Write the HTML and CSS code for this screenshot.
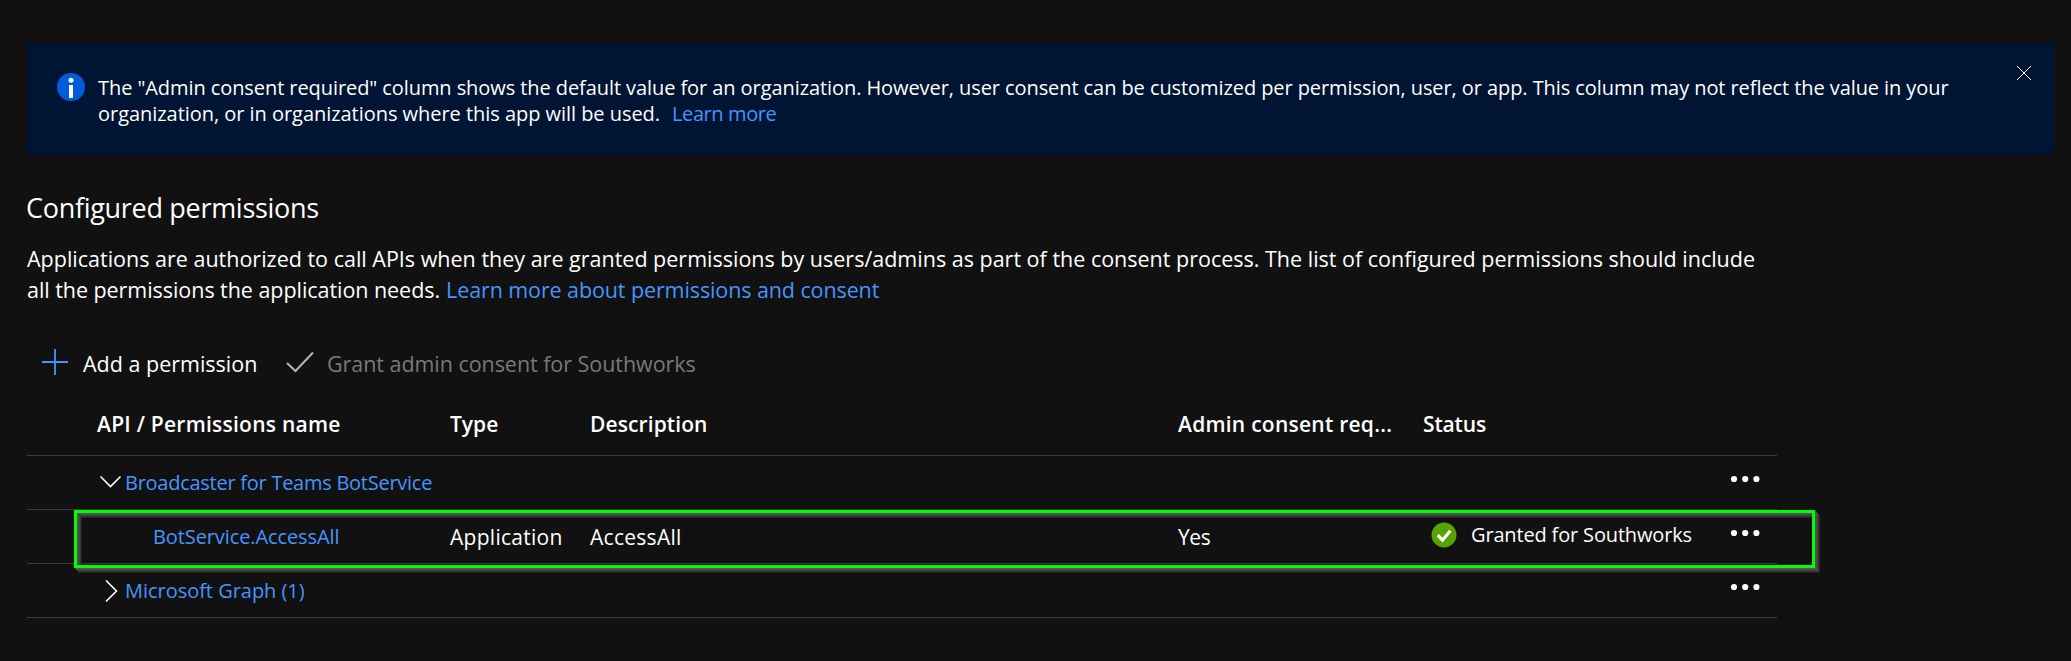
FILE: index.html
```html
<!DOCTYPE html>
<html lang="en">
<head>
<meta charset="utf-8">
<title>Configured permissions</title>
<link rel="stylesheet" href="styles.css">
</head>
<body>
<main class="page">
  <section class="banner">
    <svg class="banner-icon" viewBox="0 0 28 28"><circle cx="14" cy="14" r="14" fill="#015cda"/><circle cx="14" cy="7.3" r="2.5" fill="#fff"/><rect x="12" y="12" width="4" height="13" fill="#fff"/></svg>
    <p class="banner-text"><span class="banner-line">The "Admin consent required" column shows the default value for an organization. However, user consent can be customized per permission, user, or app. This column may not reflect the value in your</span><br><span class="banner-line2">organization, or in organizations where this app will be used.</span><a class="link banner-link">Learn more</a></p>
    <svg class="close" viewBox="0 0 16 16"><path d="M1 1L15 15M15 1L1 15" fill="none" stroke="#fff" stroke-width="1"/></svg>
  </section>

  <h1 class="heading">Configured permissions</h1>
  <p class="intro">Applications are authorized to call APIs when they are granted permissions by users/admins as part of the consent process. The list of configured permissions should include<br><span class="intro-end">all the permissions the application needs.</span><a class="link intro-link">Learn more about permissions and consent</a></p>

  <div class="toolbar">
    <svg class="plus" viewBox="0 0 28 28"><path d="M14 1V27M1 14H27" fill="none" stroke="#4894fe" stroke-width="1.8"/></svg>
    <span class="add">Add a permission</span>
    <svg class="tick" viewBox="0 0 28 22"><path d="M1 12L9.500 20L27 1.500" fill="none" stroke="#b5b5b5" stroke-width="2"/></svg>
    <span class="grant">Grant admin consent for Southworks</span>
  </div>

  <div class="table">
    <div class="row head">
      <span></span><span class="h-api">API / Permissions name</span><span>Type</span><span class="h-desc">Description</span><span class="h-admin">Admin consent req...</span><span class="h-status">Status</span><span></span>
    </div>
    <div class="row">
      <span></span>
      <span class="api"><svg class="chevron" viewBox="0 0 26 34"><path d="M3.500 7.500L13.500 17.500L23.500 7.500" fill="none" stroke="#fff" stroke-width="1.6"/></svg><a class="link name-b">Broadcaster for Teams BotService</a></span>
      <span></span><span></span><span></span><span></span>
      <svg class="dots" viewBox="0 0 30 8"><g fill="#fff"><circle cx="4" cy="4" r="3.100"/><circle cx="15.200" cy="4" r="3.100"/><circle cx="26.400" cy="4" r="3.100"/></g></svg>
    </div>
    <div class="row marked">
      <span></span>
      <a class="link child">BotService.AccessAll</a>
      <span class="val">Application</span><span class="val">AccessAll</span><span class="yes">Yes</span>
      <span class="status"><svg class="granted-icon" viewBox="0 0 26 26"><circle cx="13" cy="13" r="12.500" fill="#57a300"/><path d="M6.800 13.200L11.500 18.200L19.300 8.800" fill="none" stroke="#fff" stroke-width="3.200"/></svg><span class="granted">Granted for Southworks</span></span>
      <svg class="dots" viewBox="0 0 30 8"><g fill="#fff"><circle cx="4" cy="4" r="3.100"/><circle cx="15.200" cy="4" r="3.100"/><circle cx="26.400" cy="4" r="3.100"/></g></svg>
      <div class="highlight"></div>
    </div>
    <div class="row">
      <span></span>
      <span class="api"><svg class="chevron" viewBox="0 0 26 34"><path d="M9 3.500L19.500 14L9 24.500" fill="none" stroke="#fff" stroke-width="1.600"/></svg><a class="link name-m">Microsoft Graph (1)</a></span>
      <span></span><span></span><span></span><span></span>
      <svg class="dots" viewBox="0 0 30 8"><g fill="#fff"><circle cx="4" cy="4" r="3.100"/><circle cx="15.200" cy="4" r="3.100"/><circle cx="26.400" cy="4" r="3.100"/></g></svg>
    </div>
  </div>
</main>
</body>
</html>
```
FILE: styles.css
```css
* { box-sizing: border-box; }
body { margin: 0; background: #111; color: #fff; font-family: "Open Sans", sans-serif; overflow: hidden; }
.page { height: 661px; padding: 43px 17px 0 27px; white-space: nowrap; }
svg { display: block; flex: none; }
p, h1 { margin: 0; font-weight: 400; }
.link { color: #4894fe; }

.banner { display: flex; height: 112px; padding: 30px 22px 0 30px; background: #001433; border-radius: 4px; }
.banner-icon { width: 28px; height: 28px; }
.banner-text { margin: 2px auto 0 13px; font-size: 20px; line-height: 26px; }
.banner-line { letter-spacing: -0.078px; }
.banner-line2 { letter-spacing: -0.04px; }
.banner-link { margin-left: 12px; letter-spacing: -0.4px; }
.close { width: 16px; height: 16px; margin-top: -8px; }

.heading { margin-top: 35px; margin-left: -1px; font-size: 27px; line-height: 36px; letter-spacing: -0.3px; }
.intro { margin-top: 17px; font-size: 21.5px; line-height: 31px; }
.intro-end { letter-spacing: -0.05px; }
.intro-link { margin-left: 6px; letter-spacing: -0.1px; }

.toolbar { display: flex; height: 30px; margin-top: 44px; padding-left: 14px; font-size: 21.5px; line-height: 30px; }
.plus { width: 28px; height: 28px; margin-top: -1px; }
.add { width: 175px; margin-left: 14px; }
.tick { width: 28px; height: 22px; margin: 2px 13px 0 28px; }
.grant { color: #797979; letter-spacing: -0.05px; }

.table { width: 1750px; margin-top: 23px; }
.row { display: grid; grid-template-columns: 70px 353px 140px 588px 245px 305px 49px; height: 54px; padding-top: 13px; border-bottom: 1px solid #3d3d3d; font-size: 21px; line-height: 28px; }
.head { padding-top: 8px; font-weight: 600; }
.h-api, .h-admin { letter-spacing: 0.25px; }
.h-desc { letter-spacing: 0.1px; }
.h-status { letter-spacing: -0.15px; }
.api { display: flex; font-size: 20px; }
.chevron { width: 26px; height: 34px; margin-right: 2px; }
.name-b { letter-spacing: -0.26px; }
.name-m { letter-spacing: -0.03px; }
.child { padding-left: 56px; font-size: 20px; letter-spacing: -0.1px; }
.val { letter-spacing: 0.28px; }
.yes { letter-spacing: -0.4px; }
.status { display: flex; padding-left: 8px; font-size: 20px; }
.granted-icon { width: 26px; height: 26px; margin-top: -1px; }
.granted { margin: -2px 0 0 14px; letter-spacing: -0.16px; }
.dots { width: 30px; height: 8px; margin: 6px 0 0 2px; }

.marked { position: relative; }
.highlight {
  position: absolute; left: 47px; top: 0; width: 1741px; height: 58px;
  border: 3px solid #0f0;
  box-shadow:
    1px 1px #555, 2px 2px #4d4d4d, 3px 3px #434343, 4px 4px #343434, 5px 5px #222,
    inset 1px 1px #555, inset 2px 2px #4d4d4d, inset 3px 3px #434343, inset 4px 4px #343434, inset 5px 5px #222;
}
```
